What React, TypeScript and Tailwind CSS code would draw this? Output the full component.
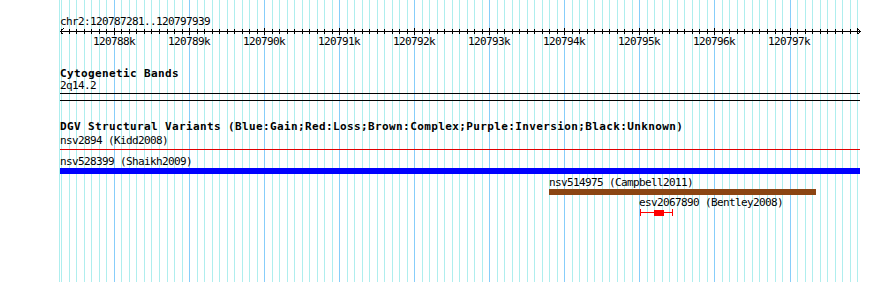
import React from "react";

const START = 120787281;
const END = 120797939;
const X0 = 60;
const W = 800;
const xOf = (p: number) => X0 + ((p - START) * W) / (END - START);

const ticks: { x: number; major: boolean }[] = [];
for (let p = 120787300; p <= 120797900; p += 100) {
  ticks.push({ x: Math.round(xOf(p)), major: p % 1000 === 0 });
}

const labels = [
  "120788k",
  "120789k",
  "120790k",
  "120791k",
  "120792k",
  "120793k",
  "120794k",
  "120795k",
  "120796k",
  "120797k",
];

function Grid() {
  return (
    <svg
      className="absolute left-0 top-0 pointer-events-none"
      width={890}
      height={282}
      shapeRendering="crispEdges"
    >
      <line x1={59.5} y1={0} x2={59.5} y2={282} stroke="#afeeee" strokeWidth={1} />
      {ticks.map((t, i) => (
        <line
          key={i}
          x1={t.x + 0.5}
          y1={0}
          x2={t.x + 0.5}
          y2={282}
          stroke={t.major ? "#87cefa" : "#afeeee"}
          strokeWidth={1}
        />
      ))}
    </svg>
  );
}

function Ruler() {
  return (
    <svg className="block" width={890} height={9} shapeRendering="crispEdges">
      <line x1={60} y1={3.5} x2={861} y2={3.5} stroke="#000" strokeWidth={1} />
      <polyline points="63.5,0.5 60.5,3.5 63.5,6.5" fill="none" stroke="#000" strokeWidth={1} />
      <polyline points="857.5,0.5 860.5,3.5 857.5,6.5" fill="none" stroke="#000" strokeWidth={1} />
      {ticks.map((t, i) => (
        <line
          key={i}
          x1={t.x + 0.5}
          y1={t.major ? 0 : 1}
          x2={t.x + 0.5}
          y2={t.major ? 7 : 6}
          stroke="#000"
          strokeWidth={1}
        />
      ))}
    </svg>
  );
}

const txt = "h-[12px] leading-[12px] text-[11px] tracking-[-0.62px] whitespace-nowrap";
const bold = "h-[12px] leading-[12px] text-[11px] font-bold tracking-[0.38px] whitespace-nowrap";

export default function App() {
  return (
    <div className="relative w-[890px] h-[282px] overflow-hidden bg-white text-black font-['DejaVu_Sans_Mono',monospace]">
      <Grid />
      <div className="relative">
        <div className="h-[16px]" />
        <div className={`pl-[60px] ${txt}`}>chr2:120787281..120797939</div>
        <Ruler />
        <div className="flex pl-[76.5px] h-[9px] leading-[9px] text-[11px] tracking-[-0.62px]">
          {labels.map((l) => (
            <div key={l} className="w-[75px] shrink-0 text-center">
              {l}
            </div>
          ))}
        </div>

        <div className="h-[22px]" />
        <div className={`pl-[60px] ${bold}`}>Cytogenetic Bands</div>
        <div className={`pl-[60px] ${txt}`}>2q14.2</div>
        <div className="mt-[1px] ml-[60px] w-[800px] h-[8px] border-y border-black" />

        <div className="h-[20px]" />
        <div className={`pl-[60px] ${bold}`}>
          DGV Structural Variants (Blue:Gain;Red:Loss;Brown:Complex;Purple:Inversion;Black:Unknown)
        </div>
        <div className={`mt-[2px] pl-[60px] ${txt}`}>nsv2894 (Kidd2008)</div>
        <div className="mt-[2px] ml-[60px] w-[800px] h-px bg-[#e00000]" />

        <div className="h-[6px]" />
        <div className={`pl-[60px] ${txt}`}>nsv528399 (Shaikh2009)</div>
        <div className="ml-[60px] w-[800px] h-[6px] bg-[#0000ff]" />

        <div className="h-[3px]" />
        <div className={`pl-[549px] ${txt}`}>nsv514975 (Campbell2011)</div>
        <div className="ml-[549px] w-[267px] h-[6px] bg-[#8b4513]" />

        <div className="h-[2px]" />
        <div className={`pl-[639px] ${txt}`}>esv2067890 (Bentley2008)</div>
        <svg className="block ml-[640px]" width={34} height={7} shapeRendering="crispEdges">
          <line x1={0.5} y1={0} x2={0.5} y2={7} stroke="#ff0000" strokeWidth={1} />
          <line x1={32.5} y1={0} x2={32.5} y2={7} stroke="#ff0000" strokeWidth={1} />
          <line x1={0} y1={3.5} x2={33} y2={3.5} stroke="#ff0000" strokeWidth={1} />
          <rect x={14} y={1} width={10} height={6} fill="#ff0000" />
        </svg>
      </div>
    </div>
  );
}
